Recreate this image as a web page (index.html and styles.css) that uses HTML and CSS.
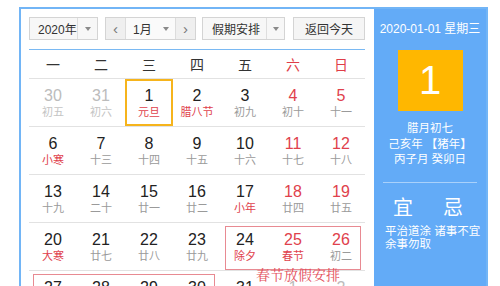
FILE: index.html
```html
<html lang="zh-CN"><head>
    <meta charset="UTF-8">
    <title>万年历</title>
    <link rel="stylesheet" href="styles.css">
</head>
<body>
    <div class="calendar">
        <!-- left: toolbar + month grid -->
        <div class="main">
            <div class="toolbar">
                <div class="sel year"><span class="val">2020年</span><span class="arrow"></span></div>
                <div class="month-group">
                    <span class="nav">&lsaquo;</span>
                    <div class="month"><span class="val">1月</span><span class="arrow plain"></span></div>
                    <span class="nav">&rsaquo;</span>
                </div>
                <div class="sel holiday"><span class="val">假期安排</span><span class="arrow"></span></div>
                <button class="today-btn">返回今天</button>
            </div>

            <div class="weekdays">
                <span>一</span><span>二</span><span>三</span><span>四</span><span>五</span>
                <span class="red">六</span><span class="red">日</span>
            </div>

            <div class="week">
                <div class="day other"><b>30</b><i>初五</i></div>
                <div class="day other"><b>31</b><i>初六</i></div>
                <div class="day today"><b>1</b><i class="fest">元旦</i></div>
                <div class="day"><b>2</b><i class="fest">腊八节</i></div>
                <div class="day"><b>3</b><i>初九</i></div>
                <div class="day weekend"><b>4</b><i>初十</i></div>
                <div class="day weekend"><b>5</b><i>十一</i></div>
            </div>
            <div class="week">
                <div class="day"><b>6</b><i class="fest">小寒</i></div>
                <div class="day"><b>7</b><i>十三</i></div>
                <div class="day"><b>8</b><i>十四</i></div>
                <div class="day"><b>9</b><i>十五</i></div>
                <div class="day"><b>10</b><i>十六</i></div>
                <div class="day weekend"><b>11</b><i>十七</i></div>
                <div class="day weekend"><b>12</b><i>十八</i></div>
            </div>
            <div class="week">
                <div class="day"><b>13</b><i>十九</i></div>
                <div class="day"><b>14</b><i>二十</i></div>
                <div class="day"><b>15</b><i>廿一</i></div>
                <div class="day"><b>16</b><i>廿二</i></div>
                <div class="day"><b>17</b><i class="fest">小年</i></div>
                <div class="day weekend"><b>18</b><i>廿四</i></div>
                <div class="day weekend"><b>19</b><i>廿五</i></div>
            </div>
            <div class="week">
                <div class="day"><b>20</b><i class="fest">大寒</i></div>
                <div class="day"><b>21</b><i>廿七</i></div>
                <div class="day"><b>22</b><i>廿八</i></div>
                <div class="day"><b>23</b><i>廿九</i></div>
                <div class="day"><b>24</b><i class="fest">除夕</i></div>
                <div class="day weekend"><b>25</b><i class="fest">春节</i></div>
                <div class="day weekend"><b>26</b><i>初二</i></div>
                <div class="rest-box first">
                    <span class="rest-label">春节放假安排</span>
                </div>
            </div>
            <div class="week">
                <div class="day"><b>27</b><i>初三</i></div>
                <div class="day"><b>28</b><i>初四</i></div>
                <div class="day"><b>29</b><i>初五</i></div>
                <div class="day"><b>30</b><i>初六</i></div>
                <div class="day"><b>31</b><i>初七</i></div>
                <div class="day other"><b>1</b><i>初八</i></div>
                <div class="day other"><b>2</b><i>初九</i></div>
                <div class="rest-box second"></div>
            </div>
        </div>

        <!-- right: selected day detail -->
        <div class="panel">
            <div class="date-line">2020-01-01 星期三</div>
            <div class="big-day">1</div>
            <div class="lunar">
                <p>腊月初七</p>
                <p>己亥年 【猪年】</p>
                <p>丙子月 癸卯日</p>
            </div>
            <div class="divider"></div>
            <div class="yiji">
                <span>宜</span><span>忌</span>
            </div>
            <div class="yiji-text">
                <p>平治道涂 诸事不宜</p>
                <p>余事勿取</p>
            </div>
        </div>
    </div>
</body></html>
```

FILE: styles.css
```css
body {
    margin: 0;
    background: #fff;
    font-family: "Liberation Sans", "Noto Sans CJK SC", sans-serif;
    color: #333;
    overflow: hidden;
}
.calendar {
    margin: 7px 0 0 19px;
    width: 469px;
    height: 300px;
    box-sizing: border-box;
    border: 2px solid #72b5f6;
    border-bottom: none;
    display: flex;
}
.main {
    width: 353px;
    box-sizing: border-box;
    padding: 8px 9px 0 8px;
}

/* toolbar */
.toolbar {
    display: flex;
    height: 23px;
    padding-bottom: 9px;
    border-bottom: 1px solid #7ab9f3;
}
.sel, .month-group, .today-btn {
    box-sizing: border-box;
    height: 23px;
    border: 1px solid #d4d4d4;
    background: #f7f7f7;
    font-size: 12px;
    color: #333;
}
.sel {
    display: flex;
}
.sel .val, .month .val {
    flex: 1;
    display: flex;
    align-items: center;
}
.year {
    width: 69px;
    margin-right: 7px;
}
.year .val {
    padding-left: 8px;
}
.arrow {
    width: 19px;
    border-left: 1px solid #dedede;
    display: flex;
    align-items: center;
    justify-content: center;
}
.arrow::after {
    content: "";
    border-left: 3px solid transparent;
    border-right: 3px solid transparent;
    border-top: 4px solid #8a8a8a;
}
.arrow.plain {
    border-left: none;
}
.month-group {
    width: 91px;
    margin-right: 6px;
    display: flex;
}
.nav {
    width: 19px;
    background: #efefef;
    display: flex;
    align-items: center;
    justify-content: center;
    color: #777;
    font-size: 15px;
}
.month {
    flex: 1;
    display: flex;
    background: #fafafa;
    border-left: 1px solid #dcdcdc;
    border-right: 1px solid #dcdcdc;
}
.month .val {
    padding-left: 7px;
}
.holiday {
    width: 83px;
    margin-right: 8px;
}
.holiday .val {
    padding-left: 9px;
}
.holiday .arrow {
    width: 17px;
}
.today-btn {
    width: 72px;
    padding: 0;
    font-family: inherit;
    background: #f5f5f5;
}

/* grid */
.weekdays, .week {
    display: grid;
    grid-template-columns: repeat(7, 48px);
    border-bottom: 1px solid #e2e2e2;
}
.weekdays {
    height: 28px;
    align-items: center;
    text-align: center;
    font-size: 14px;
}
.red {
    color: #df3d48;
}
.week {
    height: 47px;
    position: relative;
}
.day {
    display: flex;
    flex-direction: column;
    align-items: center;
    padding-top: 7px;
    box-sizing: border-box;
}
.day b {
    font-weight: normal;
    font-size: 16px;
    line-height: 19px;
    color: #222;
}
.day i {
    font-style: normal;
    font-size: 11px;
    line-height: 14px;
    color: #9a9a9a;
}
.day .fest {
    color: #e0414c;
}
.day.weekend b {
    color: #e0414c;
}
.day.other b {
    color: #bcbcbc;
}
.day.other i {
    color: #c4c4c4;
}
.day.today {
    box-shadow: inset 0 0 0 2px #f6b41c;
}

/* holiday overlays */
.rest-box {
    position: absolute;
    top: 3px;
    height: 44px;
    box-sizing: border-box;
    border: 1px solid #e88a92;
}
.rest-box.first {
    left: 196px;
    width: 136px;
}
.rest-box.second {
    left: 4px;
    width: 182px;
}
.rest-label {
    position: absolute;
    top: 37px;
    left: 30px;
    white-space: nowrap;
    font-family: "Noto Serif CJK SC", "Noto Sans CJK SC", serif;
    font-size: 14px;
    line-height: 20px;
    color: #e4505c;
}

/* detail panel */
.panel {
    width: 112px;
    background: #63abf7;
    color: #fff;
    text-align: center;
    padding-top: 12px;
    box-sizing: border-box;
}
.date-line {
    font-size: 12px;
    line-height: 16px;
}
.big-day {
    width: 65px;
    height: 61px;
    margin: 13px auto 0;
    background: #ffb700;
    font-size: 40px;
    line-height: 61px;
}
.lunar {
    margin-top: 10px;
    font-size: 11.5px;
    line-height: 15.5px;
}
.lunar p, .yiji-text p {
    margin: 0;
    white-space: nowrap;
}
.divider {
    margin: 14px 9px 0;
    height: 1px;
    background: rgba(255, 255, 255, 0.45);
}
.yiji {
    display: flex;
    gap: 10px;
    padding-left: 9px;
    margin-top: 13px;
    font-size: 20px;
    line-height: 24px;
}
.yiji span {
    width: 40px;
}
.yiji-text {
    margin-top: 5px;
    padding-left: 11px;
    text-align: left;
    font-size: 11.5px;
    line-height: 13px;
}
```
